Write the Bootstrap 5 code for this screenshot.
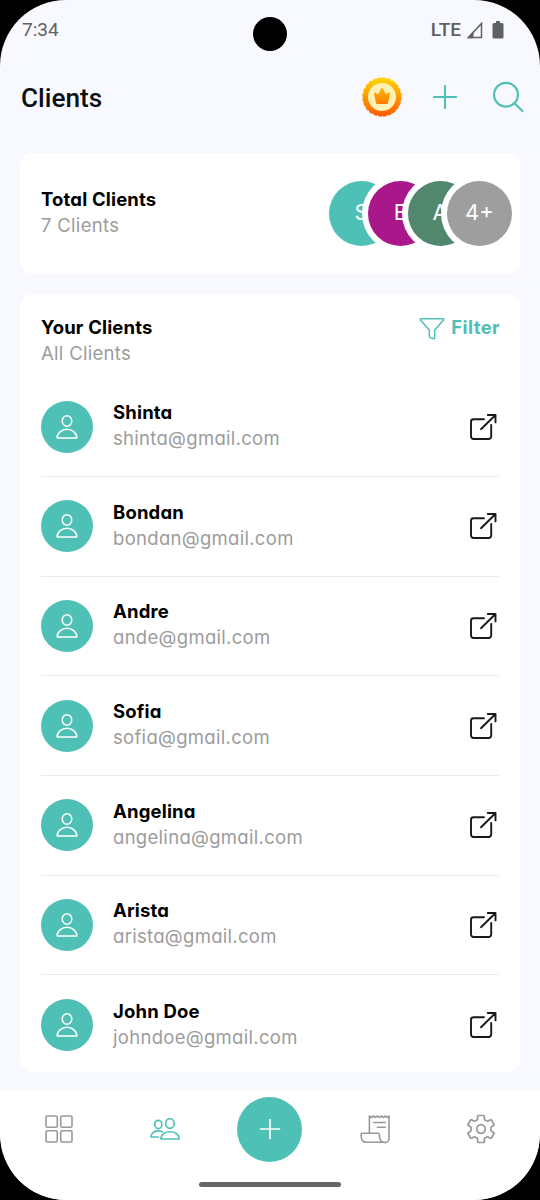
<!DOCTYPE html>
<html lang="en">
<head>
<meta charset="utf-8">
<meta name="viewport" content="width=device-width, initial-scale=1">
<title>Clients</title>
<link href="https://cdn.jsdelivr.net/npm/bootstrap@5.3.0/dist/css/bootstrap.min.css" rel="stylesheet">
<style>
  :root { --teal: #4fc0b5; }
  body { background: #000; font-family: Inter, sans-serif; font-feature-settings: "cv11"; }
  svg { display: block; flex: none; fill: none; }
  .phone { width: 540px; height: 1200px; background: #f8f9ff; border-radius: 66px; }
  .status { height: 60px; padding: 0 36px 0 22px; font: 400 19px/60px Roboto, sans-serif; color: #5f6062; }
  .status .lte { font-weight: 500; font-size: 19px; }
  .camera { width: 34px; height: 34px; top: 17px; left: 253px; background: #000; }
  .topbar { height: 74px; padding: 0 16px 0 21px; }
  .topbar h1 { font: 500 26.2px/1 Roboto, sans-serif; color: #0a0f14; padding-top: 2px; }
  .panel { margin: 0 20px; border: 0; border-radius: 13px; background: #fff; }
  .summary { height: 121px; margin-top: 19px; padding: 0 8px 0 21px; }
  .clients { height: 778px; margin-top: 20px; padding: 20px 21px 0; }
  .ttl { font-size: 18.5px; line-height: 26px; font-weight: 650; color: #000; letter-spacing: .17px; white-space: nowrap; }
  .sub { font-size: 18.5px; line-height: 26px; color: #9c9c9c; letter-spacing: .3px; white-space: nowrap; }
  .teal { color: var(--teal); }
  .bubble { width: 65px; height: 65px; margin-left: -25.7px; padding-bottom: 2px; color: #fff; font-size: 22px; box-shadow: 0 0 0 6px #fff; position: relative; }
  .client { height: 99.7px; padding: 0; background: transparent; border-bottom: 1.5px solid #ebebeb; }
  .client:last-child { border-bottom-color: transparent; }
  .avatar { width: 52px; height: 52px; background: var(--teal); margin-right: 20px; }
  .tabs { height: 110px; margin-top: 17.5px; background: #fff; border-radius: 0 0 66px 66px; }
  .tabs .nav-link { width: 105.4px; height: 79px; padding: 0; color: #999; }
  .tabs .fab { width: 65px; height: 65px; background: var(--teal); }
  .homebar { width: 142px; height: 5px; background: #666; margin: 13.5px auto 0; }
</style>
</head>
<body>
<svg width="0" height="0" class="position-absolute" aria-hidden="true">
  <symbol id="user" viewBox="0 0 24 26"><g stroke="#fff" stroke-width="1.5" stroke-linejoin="round"><ellipse cx="12" cy="7" rx="4.8" ry="5.3"/><path d="M2.9 24h18.2c.6 0 .9-.4.8-1-.7-4-4.6-7.700-9.900-7.700S2.800 19 2.100 23c-.1.600.2 1 .8 1z"/></g></symbol>
  <symbol id="open" viewBox="0 0 28 28"><g stroke="#17191c" stroke-width="1.900" stroke-linecap="round" stroke-linejoin="round"><path d="M15 6.200H4.500a2.500 2.500 0 0 0-2.500 2.500v14.800a2.500 2.500 0 0 0 2.500 2.500h15.200a2.500 2.500 0 0 0 2.500-2.500V12"/><path d="M12 16.200 26.500 2M18.800 2h7.700v7.400"/></g></symbol>
</svg>

<div class="phone position-relative overflow-hidden">
  <div class="camera position-absolute rounded-circle"></div>
  <div class="status d-flex align-items-center justify-content-between">
    <span>7:34</span>
    <div class="d-flex align-items-center">
      <span class="lte">LTE</span>
      <svg style="margin-left:5px" width="18" height="18" viewBox="0 0 18 18"><path d="M2.500 16.500h13V2.500z" stroke="#5f6062" stroke-width="1.500"/><path d="M1 17.200 7.500 10v7.200z" fill="#5f6062"/></svg>
      <svg style="margin-left:8px" width="12" height="18" viewBox="0 0 12 18"><path d="M4 0h4v2h2a1.500 1.500 0 0 1 1.500 1.500V16a1.500 1.500 0 0 1-1.500 1.500H2A1.500 1.500 0 0 1 .5 16V3.500A1.500 1.500 0 0 1 2 2h2z" fill="#5f6062"/></svg>
    </div>
  </div>

  <header class="topbar d-flex align-items-center justify-content-between">
    <h1 class="m-0">Clients</h1>
    <div class="d-flex align-items-center">
      <svg width="40" height="40" viewBox="-20 -20 40 40">
        <defs>
          <linearGradient id="gold" x1="0" y1="0" x2="0" y2="1"><stop offset="0" stop-color="#ffd500"/><stop offset="1" stop-color="#ff5a00"/></linearGradient>
          <linearGradient id="crown" x1="0" y1="0" x2="0" y2="1"><stop offset="0" stop-color="#ffb700"/><stop offset="1" stop-color="#ff7a00"/></linearGradient>
        </defs>
        <circle r="19" fill="url(#gold)"/><circle r="19" stroke="url(#gold)" stroke-width="1.400" stroke-dasharray="3.700 1.274"/>
        <circle r="14" fill="#fff0b5"/>
        <path d="M-8-3.800q0-1 1-.7l3.200 1.700L-1-8.200q1-1.600 2 0l2.800 5.400L7-4.500q1-.3 1 .7L6 6q-.2 1-1.200 1h-9.600Q-5.800 7-6 6z" fill="url(#crown)"/>
      </svg>
      <svg style="margin-left:31px" width="24" height="24" viewBox="0 0 24 24"><path d="M12 1v22M1 12h22" stroke="#4fc0b5" stroke-width="2.100" stroke-linecap="round"/></svg>
      <svg style="margin-left:35px" width="32" height="32" viewBox="0 0 32 32"><g stroke="#4fc0b5" stroke-width="2.200" stroke-linecap="round"><circle cx="14" cy="13.700" r="11.900"/><path d="m22.600 22.300 7.800 7.700"/></g></svg>
    </div>
  </header>

  <section class="card panel summary flex-row align-items-center justify-content-between">
    <div style="margin-top:-3px">
      <div class="ttl">Total Clients</div>
      <div class="sub">7 Clients</div>
    </div>
    <div class="d-flex">
      <div class="bubble rounded-circle d-flex align-items-center justify-content-center" style="background:#4fc0b5">S</div>
      <div class="bubble rounded-circle d-flex align-items-center justify-content-center" style="background:#aa178b">B</div>
      <div class="bubble rounded-circle d-flex align-items-center justify-content-center" style="background:#50876d">A</div>
      <div class="bubble rounded-circle d-flex align-items-center justify-content-center" style="background:#9e9e9e">4+</div>
    </div>
  </section>

  <section class="card panel clients overflow-hidden">
    <div class="d-flex justify-content-between flex-shrink-0" style="height:63.3px">
      <div>
        <div class="ttl">Your Clients</div>
        <div class="sub">All Clients</div>
      </div>
      <div class="d-flex align-items-start teal">
        <svg style="margin:3px 6px 0 0" width="26" height="24" viewBox="0 0 26 24"><path d="M2 1.800h22c.8 0 1 .7.6 1.200L15.700 13v7.800c0 .8-.5 1.100-1.200.9l-3.300-1.100c-.6-.2-.9-.5-.9-1.100V13L1.400 3C1 2.500 1.200 1.800 2 1.800z" stroke="#4fc0b5" stroke-width="1.500" stroke-linejoin="round"/></svg>
        <span class="ttl teal" style="letter-spacing:.4px;margin-right:-1px">Filter</span>
      </div>
    </div>
    <div class="list-group list-group-flush flex-shrink-0" id="clientList"></div>
  </section>

  <footer class="tabs">
    <nav class="nav flex-nowrap justify-content-center">
      <a class="nav-link d-flex align-items-center justify-content-center"><svg width="28" height="28" viewBox="0 0 28 28"><g stroke="#999" stroke-width="1.600"><rect x="1" y="1" width="11.300" height="11.300" rx="1.500"/><rect x="15.700" y="1" width="11.300" height="11.300" rx="1.500"/><rect x="1" y="15.700" width="11.300" height="11.300" rx="1.500"/><rect x="15.700" y="15.700" width="11.300" height="11.300" rx="1.500"/></g></svg></a>
      <a class="nav-link d-flex align-items-center justify-content-center"><svg width="30" height="24" viewBox="0 0 30 24"><g stroke="#4fc0b5" stroke-width="1.600" stroke-linejoin="round" stroke-linecap="round"><ellipse cx="8.300" cy="7.500" rx="3.600" ry="4.100"/><ellipse cx="19.900" cy="6.500" rx="4.300" ry="4.900"/><path d="M11.400 22h17.100c.6 0 .9-.4.7-1-1-3.700-4.700-6.200-9.200-6.200s-8.200 2.500-9.200 6.200c-.2.600 0 1 .6 1z"/><path d="M8.500 20H1.500c-.6 0-.8-.4-.6-.9 1-3 4-5.200 7.400-5.200 1.500 0 2.800.3 4 .9"/></g></svg></a>
      <a class="nav-link d-flex align-items-center justify-content-center"><span class="fab rounded-circle d-flex align-items-center justify-content-center"><svg width="22" height="22" viewBox="0 0 22 22"><path d="M11 1.500v19M1.500 11h19" stroke="#fff" stroke-width="1.700" stroke-linecap="round"/></svg></span></a>
      <a class="nav-link d-flex align-items-center justify-content-center"><svg width="30" height="30" viewBox="0 0 30 30"><g stroke="#999" stroke-width="1.600" stroke-linejoin="round" stroke-linecap="round"><path d="M9.400 19V2l2 1.400L13.400 2l2 1.400 2-1.400 2 1.400 2-1.400 2 1.400 2-1.400 2 1.400 1.600-1.400v22.500a4.200 4.200 0 0 1-4.200 4.200"/><path d="M24.800 28.200c-3 0-4.800-1.800-5.200-4.700l-.3-3.300c-.1-.7-.5-1-1.200-1H2.200c-.8 0-1.200.4-1.100 1.200l.3 3.500c.3 2.700 1.900 4.300 4.700 4.300h18.700z"/><path d="M13.500 8.500h11.800M17.300 13.300h8"/></g></svg></a>
      <a class="nav-link d-flex align-items-center justify-content-center"><svg width="30" height="30" viewBox="-15 -15 30 30"><g stroke="#999" stroke-width="1.700" stroke-linejoin="round"><circle r="4.300"/><path id="gear"/></g></svg></a>
    </nav>
    <div class="homebar rounded-pill"></div>
  </footer>
</div>

<script>
  const people = [
    ["Shinta", "shinta@gmail.com"], ["Bondan", "bondan@gmail.com"], ["Andre", "ande@gmail.com"],
    ["Sofia", "sofia@gmail.com"], ["Angelina", "angelina@gmail.com"], ["Arista", "arista@gmail.com"],
    ["John Doe", "johndoe@gmail.com"]
  ];
  document.getElementById("clientList").innerHTML = people.map(([name, mail]) => `
    <div class="list-group-item client d-flex align-items-center">
      <div class="avatar rounded-circle d-flex align-items-center justify-content-center flex-shrink-0">
        <svg width="24" height="26"><use href="#user"/></svg>
      </div>
      <div class="flex-grow-1" style="margin-top:-3.5px"><div class="ttl">${name}</div><div class="sub">${mail}</div></div>
      <svg width="28" height="28" style="margin-right:2px"><use href="#open"/></svg>
    </div>`).join("");

  // Six-toothed gear, built from polar coordinates (angle offset, radius) per tooth.
  const tooth = [[-24, 9.9], [-18, 10.6], [-15, 13.1], [-12, 13.8], [12, 13.8], [15, 13.1], [18, 10.6], [24, 9.9]];
  const pts = [];
  for (let i = 0; i < 6; i++) for (const [a, r] of tooth) {
    const t = (i * 60 - 90 + a) * Math.PI / 180;
    pts.push((r * Math.cos(t)).toFixed(2) + " " + (r * Math.sin(t)).toFixed(2));
  }
  document.getElementById("gear").setAttribute("d", "M" + pts.join("L") + "Z");
</script>
<script src="https://cdn.jsdelivr.net/npm/bootstrap@5.3.0/dist/js/bootstrap.bundle.min.js"></script>
</body>
</html>
